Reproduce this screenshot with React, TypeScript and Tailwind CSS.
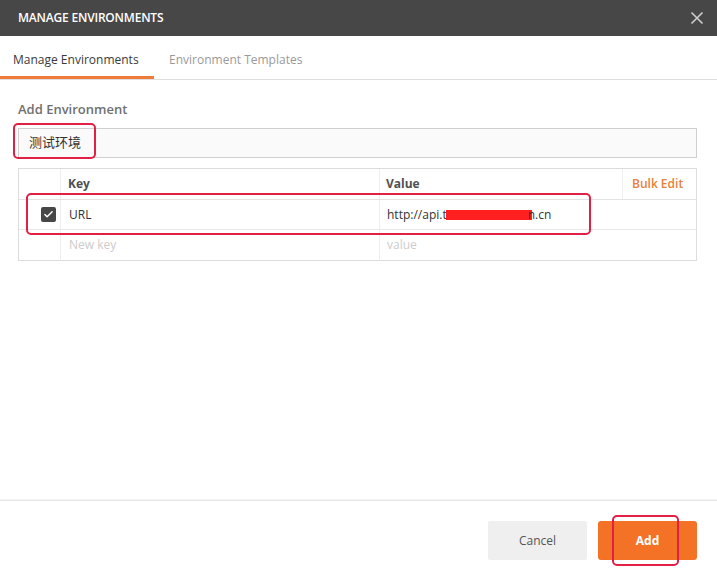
import { Check } from "lucide-react";

const font = { fontFamily: '"Open Sans", "Noto Sans CJK SC", sans-serif' };

function Annotation({ className }: { className: string }) {
  return (
    <div
      className={`pointer-events-none absolute rounded-[5px] border-2 border-[#e41f45] ${className}`}
      aria-hidden
    />
  );
}

export default function App() {
  return (
    <div
      style={font}
      className="relative flex h-[580px] w-[717px] flex-col overflow-hidden bg-white text-[#333]"
    >
      {/* header */}
      <div className="flex h-[36px] shrink-0 items-center justify-between bg-[#474747] pl-[18px] pr-[13px]">
        <span className="text-[12px] font-semibold tracking-[-0.2px] text-white">
          MANAGE ENVIRONMENTS
        </span>
        <svg width="14" height="14" viewBox="0 0 14 14" className="text-[#cfcfcf]">
          <path d="M1.5 1.5 L12.5 12.5 M12.5 1.5 L1.5 12.5" stroke="currentColor" strokeWidth="1.6" />
        </svg>
      </div>

      {/* tabs */}
      <div className="flex h-[44px] shrink-0 border-b border-[#dedede]">
        <div className="flex w-[154px] items-center border-b-[3px] border-[#f07a3a] px-[13px] pt-[8px] text-[12px] text-[#3a3a3a]">
          Manage Environments
        </div>
        <div className="flex items-center px-[15px] pt-[5px] text-[12px] text-[#9a9a9a]">
          Environment Templates
        </div>
      </div>

      {/* body */}
      <div className="flex-1 pl-[18px] pr-[20px] pt-[20px]">
        <div className="text-[13px] font-semibold leading-[18px] text-[#707070]">
          Add Environment
        </div>
        <div className="mt-[10px] flex h-[30px] items-center border border-[#cfcfcf] bg-[#fafafa] pl-[10px] text-[13px] text-[#333]">
          测试环境
        </div>

        <div className="mt-[10px] border border-[#dcdcdc] text-[12px]">
          <div className="grid h-[31px] grid-cols-[42px_318px_243px_1fr] border-b border-[#e3e3e3]">
            <div className="border-r border-[#eeeeee]" />
            <div className="flex items-center pl-[7px] font-bold text-[#505050]">Key</div>
            <div className="flex items-center border-l border-[#eeeeee] pl-[6px] font-bold text-[#505050]">
              Value
            </div>
            <div className="flex items-center border-l border-[#f0f0f0] pl-[9px] font-semibold text-[#e8803a]">
              Bulk Edit
            </div>
          </div>
          <div className="grid h-[30px] grid-cols-[42px_318px_243px_1fr] border-b border-[#e8e8e8]">
            <div className="flex items-center justify-end border-r border-[#eeeeee] pr-[4px]">
              <span className="flex h-[15px] w-[15px] items-center justify-center rounded-[2px] bg-[#474747]">
                <Check size={11} strokeWidth={3.2} className="text-white" />
              </span>
            </div>
            <div className="flex items-center pl-[8px] text-[#333]">URL</div>
            <div className="flex items-center border-l border-[#eeeeee] pl-[7px] text-[#333]">
              http://api.t
              <span className="-ml-[1px] -mr-[4px] inline-block h-[10px] w-[86px] bg-[#ff1f1f]" />
              n.cn
            </div>
            <div />
          </div>
          <div className="grid h-[30px] grid-cols-[42px_318px_243px_1fr]">
            <div className="border-r border-[#eeeeee]" />
            <div className="flex items-center pl-[8px] text-[#cccccc]">New key</div>
            <div className="flex items-center border-l border-[#eeeeee] pl-[7px] text-[#cccccc]">
              value
            </div>
            <div />
          </div>
        </div>
      </div>

      {/* footer */}
      <div className="flex h-[80px] shrink-0 justify-end gap-[11px] border-t border-[#e6e6e6] pr-[20px] pt-[20px] shadow-[0_-1px_0_#f4f4f4]">
        <button className="h-[39px] w-[99px] rounded-[2px] bg-[#efefef] text-[12px] text-[#555]">
          Cancel
        </button>
        <button className="h-[39px] w-[99px] rounded-[3px] bg-[#f37226] text-[12px] font-bold text-white">
          Add
        </button>
      </div>

      <Annotation className="left-[13px] top-[123px] h-[36px] w-[83px]" />
      <Annotation className="left-[26px] top-[193px] h-[42px] w-[565px]" />
      <Annotation className="left-[612px] top-[515px] h-[51px] w-[67px]" />
    </div>
  );
}
